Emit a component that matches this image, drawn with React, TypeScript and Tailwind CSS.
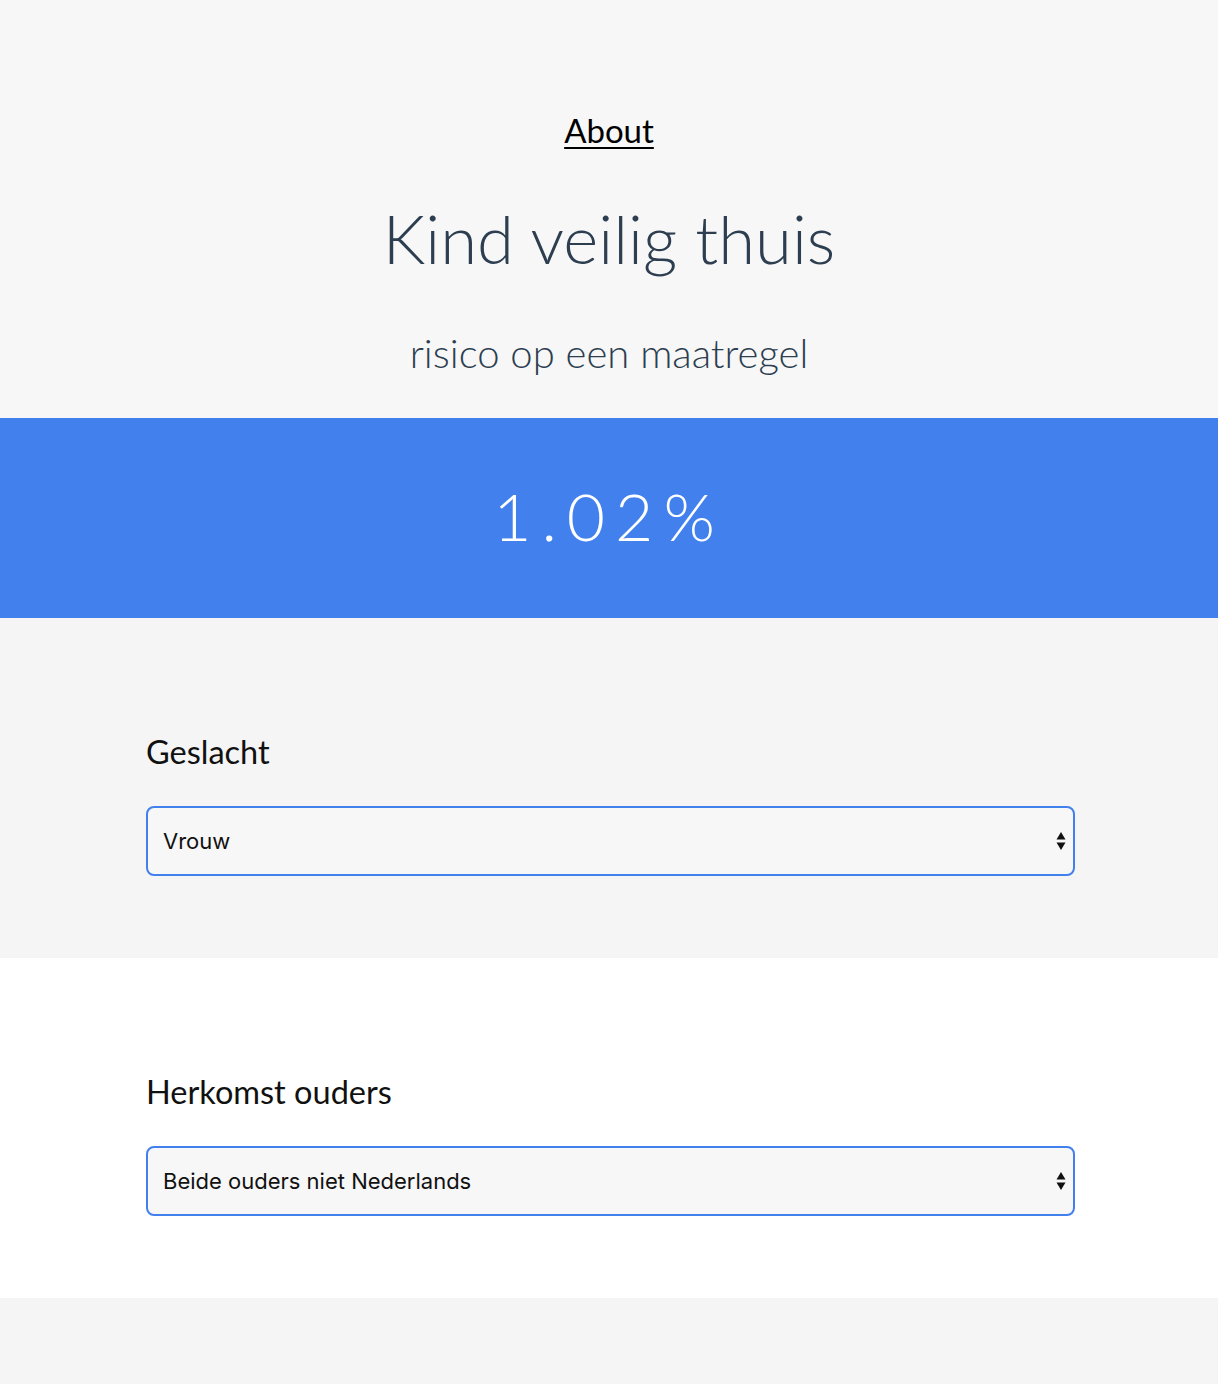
import { useState } from "react"

const options = {
  geslacht: ["Vrouw", "Man"],
  herkomst: ["Beide ouders Nederlands", "Eén ouder Nederlands", "Beide ouders niet Nederlands"],
}

function Arrows() {
  return (
    <svg className="pointer-events-none absolute right-[9px] top-1/2 -translate-y-1/2" width="10" height="18" viewBox="0 0 10 18">
      <path d="M5 0 L9.5 7.5 L0.5 7.5 Z" fill="#111" />
      <path d="M0.5 10.5 L9.5 10.5 L5 18 Z" fill="#111" />
    </svg>
  )
}

function Field({ label, value, items, onChange, white }: { label: string; value: string; items: string[]; onChange: (v: string) => void; white?: boolean }) {
  return (
    <section className={white ? "bg-white" : "bg-[#f5f5f5]"}>
      <div className="ml-[146px] w-[929px] pt-[114px] pb-[82px]">
        <h2 className="mb-[34px] text-[32.5px] leading-[40px] text-[#111] [font-family:Lato,sans-serif]">{label}</h2>
        <div className="relative">
          <select
            value={value}
            onChange={(e) => onChange(e.target.value)}
            className="block h-[70px] w-full appearance-none rounded-[8px] border-2 border-[#4280ee] bg-[#f7f7f7] px-[15px] text-[22px] text-[#111] outline-none [font-family:Inter,sans-serif]"
          >
            {items.map((o) => (
              <option key={o}>{o}</option>
            ))}
          </select>
          <Arrows />
        </div>
      </div>
    </section>
  )
}

export default function App() {
  const [geslacht, setGeslacht] = useState("Vrouw")
  const [herkomst, setHerkomst] = useState("Beide ouders niet Nederlands")

  return (
    <div className="min-h-[1384px] bg-[#f5f5f5] [font-family:Lato,sans-serif]">
      <header className="bg-[#f7f7f7] pt-[108px] pb-[40px] text-center">
        <a href="#" className="text-[33px] leading-[44px] text-black underline underline-offset-[4px] decoration-[2px]">
          About
        </a>
        <h1 className="mt-[46px] text-[67px] leading-[80px] font-light text-[#2c3e50]">Kind veilig thuis</h1>
        <p className="mt-[50px] text-[40px] leading-[50px] font-light text-[#2c3e50]">risico op een maatregel</p>
      </header>

      <div className="flex h-[200px] items-center justify-center bg-[#4280ee] pb-[6px]">
        <span className="text-[66px] font-light tracking-[10px] text-white">1.02%</span>
      </div>

      <Field label="Geslacht" value={geslacht} items={options.geslacht} onChange={setGeslacht} />
      <Field label="Herkomst ouders" value={herkomst} items={options.herkomst} onChange={setHerkomst} white />
    </div>
  )
}
